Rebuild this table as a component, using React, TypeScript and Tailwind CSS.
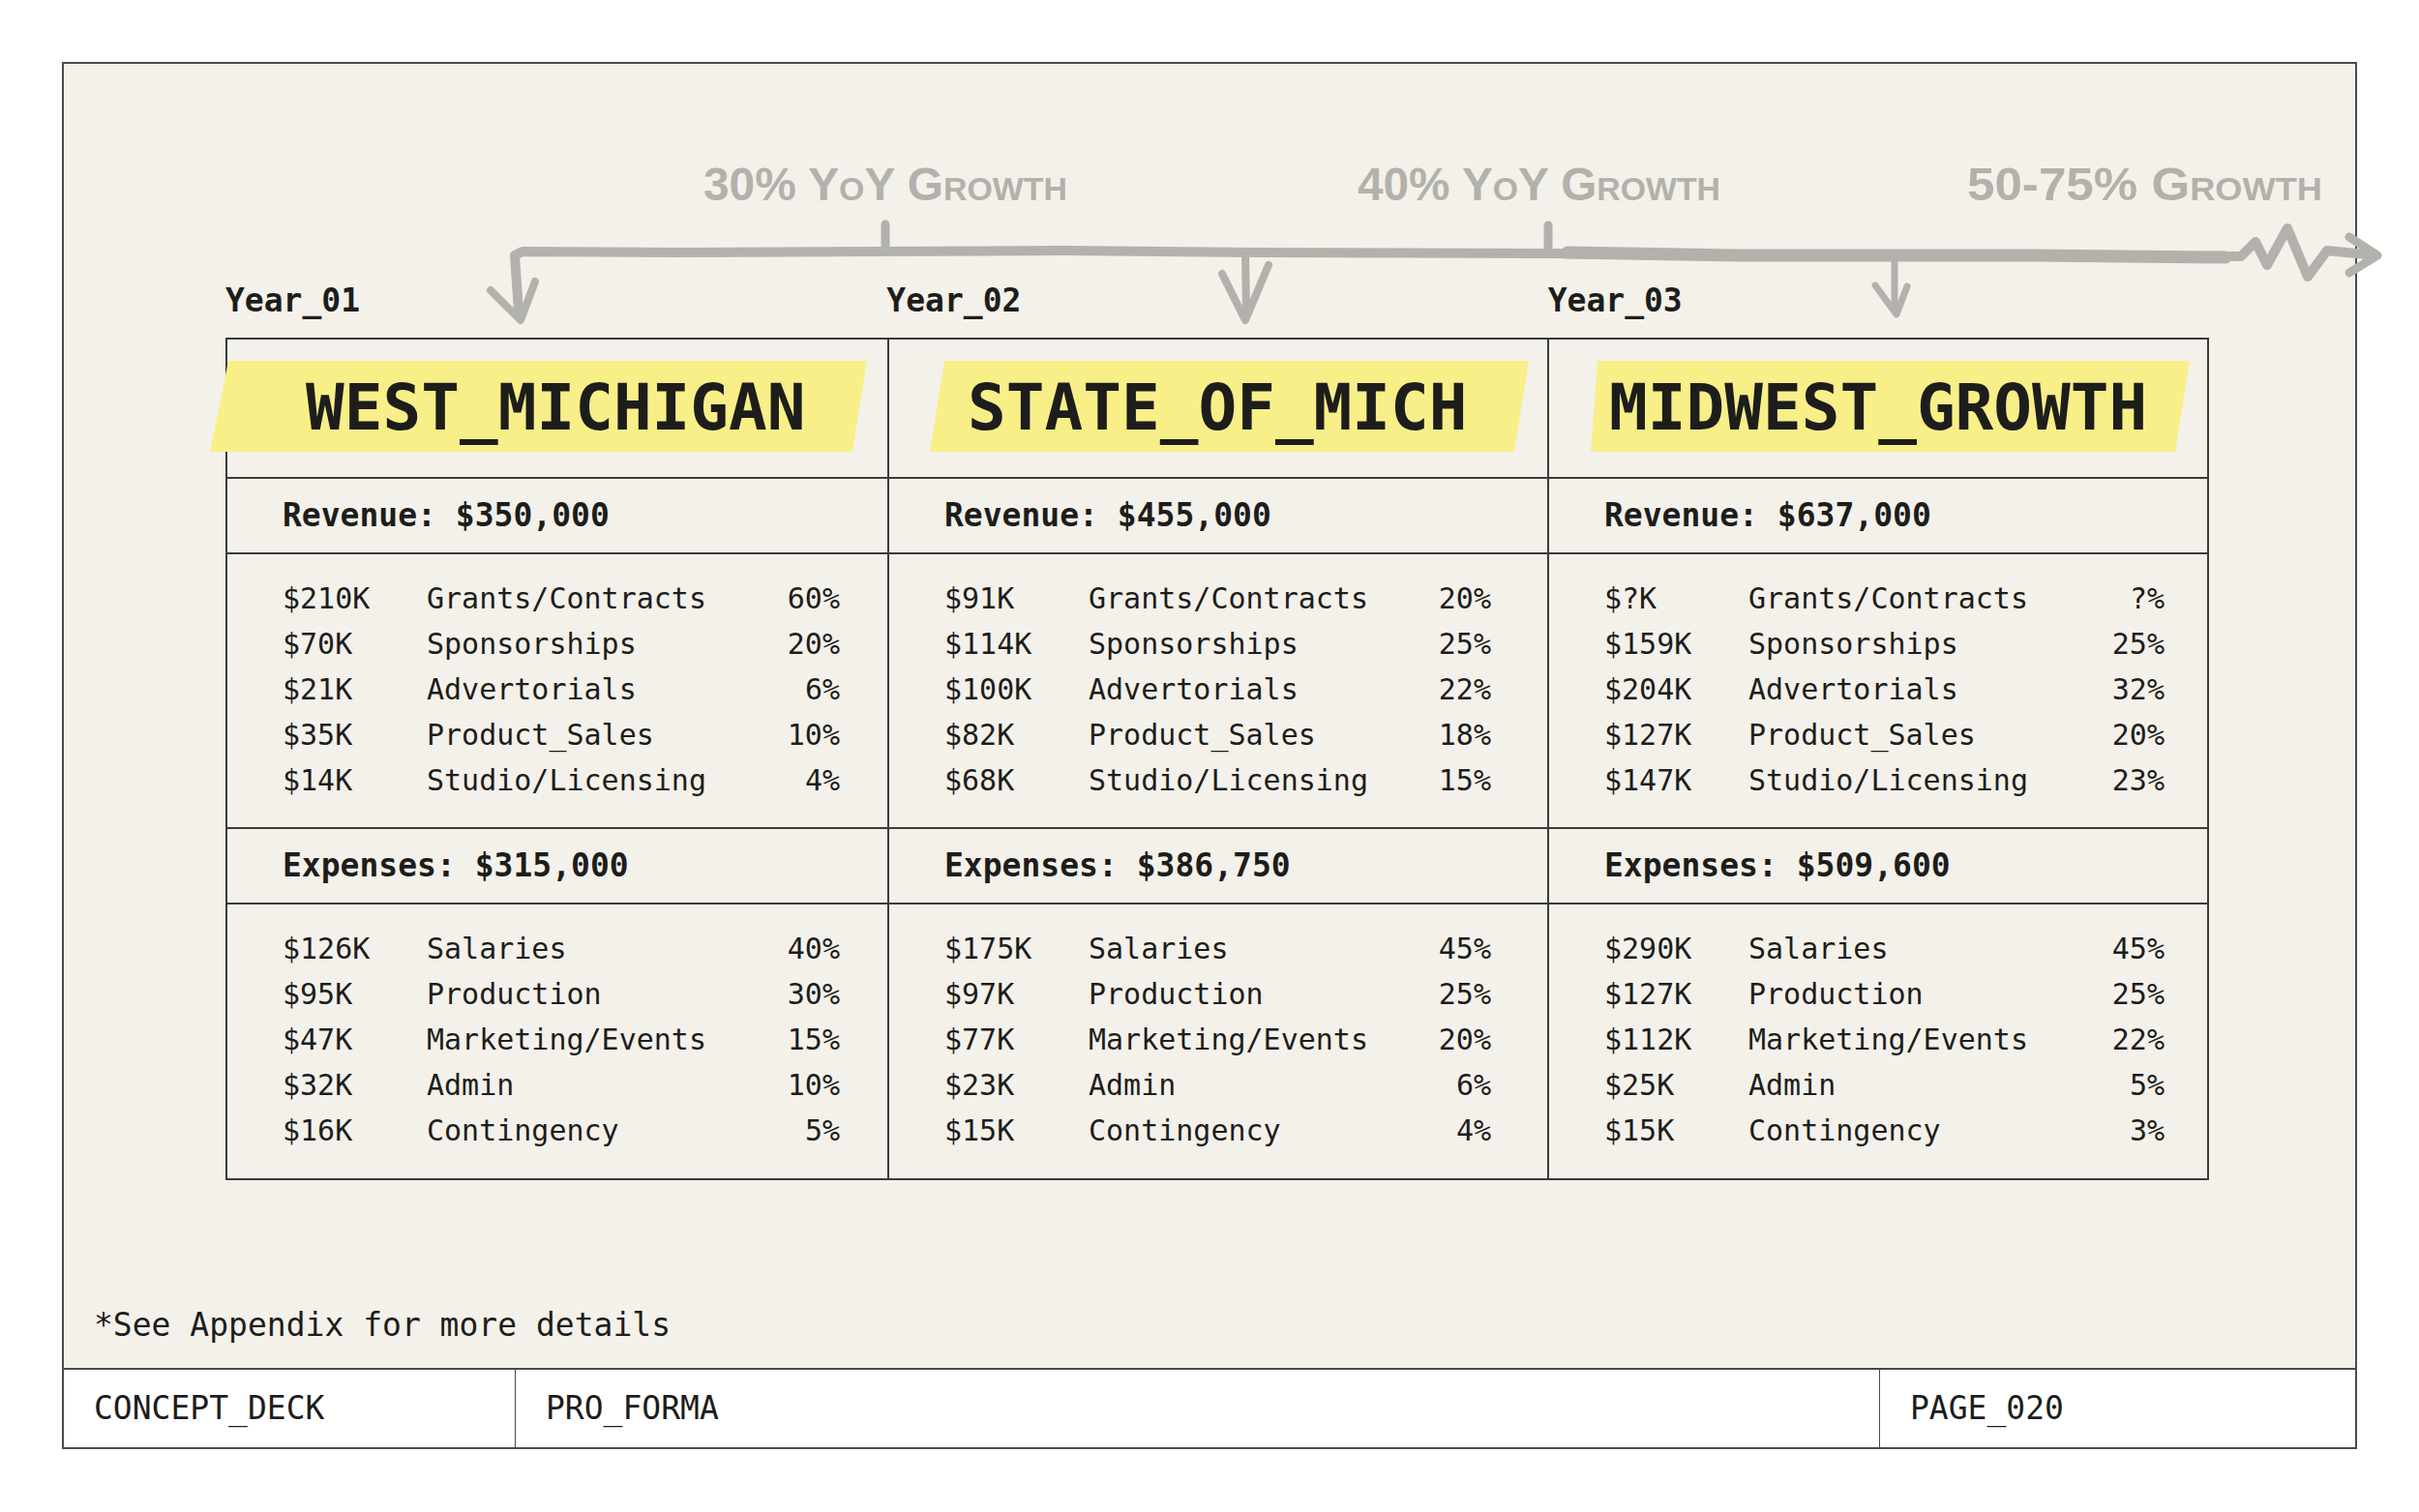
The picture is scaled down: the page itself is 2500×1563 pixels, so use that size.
import React from 'react';

type Item = { amt: string; label: string; pct: string };

interface Region {
  year: string;
  title: string;
  revenue: string;
  expenses: string;
  income: Item[];
  costs: Item[];
  bandClass: string;
  titleClass: string;
  padClass: string;
}

const mono = "font-['DejaVu_Sans_Mono','Liberation_Mono',monospace]";

const regions: Region[] = [
  {
    year: 'Year_01',
    title: 'WEST_MICHIGAN',
    revenue: '$350,000',
    expenses: '$315,000',
    income: [
      { amt: '$210K', label: 'Grants/Contracts', pct: '60%' },
      { amt: '$70K', label: 'Sponsorships', pct: '20%' },
      { amt: '$21K', label: 'Advertorials', pct: '6%' },
      { amt: '$35K', label: 'Product_Sales', pct: '10%' },
      { amt: '$14K', label: 'Studio/Licensing', pct: '4%' },
    ],
    costs: [
      { amt: '$126K', label: 'Salaries', pct: '40%' },
      { amt: '$95K', label: 'Production', pct: '30%' },
      { amt: '$47K', label: 'Marketing/Events', pct: '15%' },
      { amt: '$32K', label: 'Admin', pct: '10%' },
      { amt: '$16K', label: 'Contingency', pct: '5%' },
    ],
    bandClass: 'ml-[-18px] w-[679px] [clip-path:polygon(19px_0,679px_0,664px_100%,0_100%)]',
    titleClass: 'pl-[99px]',
    padClass: 'pr-[49px]',
  },
  {
    year: 'Year_02',
    title: 'STATE_OF_MICH',
    revenue: '$455,000',
    expenses: '$386,750',
    income: [
      { amt: '$91K', label: 'Grants/Contracts', pct: '20%' },
      { amt: '$114K', label: 'Sponsorships', pct: '25%' },
      { amt: '$100K', label: 'Advertorials', pct: '22%' },
      { amt: '$82K', label: 'Product_Sales', pct: '18%' },
      { amt: '$68K', label: 'Studio/Licensing', pct: '15%' },
    ],
    costs: [
      { amt: '$175K', label: 'Salaries', pct: '45%' },
      { amt: '$97K', label: 'Production', pct: '25%' },
      { amt: '$77K', label: 'Marketing/Events', pct: '20%' },
      { amt: '$23K', label: 'Admin', pct: '6%' },
      { amt: '$15K', label: 'Contingency', pct: '4%' },
    ],
    bandClass: 'ml-[42px] w-[619px] [clip-path:polygon(15px_0,619px_0,604px_100%,0_100%)]',
    titleClass: 'pl-[39px]',
    padClass: 'pr-[58px]',
  },
  {
    year: 'Year_03',
    title: 'MIDWEST_GROWTH',
    revenue: '$637,000',
    expenses: '$509,600',
    income: [
      { amt: '$?K', label: 'Grants/Contracts', pct: '?%' },
      { amt: '$159K', label: 'Sponsorships', pct: '25%' },
      { amt: '$204K', label: 'Advertorials', pct: '32%' },
      { amt: '$127K', label: 'Product_Sales', pct: '20%' },
      { amt: '$147K', label: 'Studio/Licensing', pct: '23%' },
    ],
    costs: [
      { amt: '$290K', label: 'Salaries', pct: '45%' },
      { amt: '$127K', label: 'Production', pct: '25%' },
      { amt: '$112K', label: 'Marketing/Events', pct: '22%' },
      { amt: '$25K', label: 'Admin', pct: '5%' },
      { amt: '$15K', label: 'Contingency', pct: '3%' },
    ],
    bandClass: 'ml-[43px] w-[619px] [clip-path:polygon(7px_0,619px_0,604px_100%,0_100%)]',
    titleClass: 'pl-[19px]',
    padClass: 'pr-[44px]',
  },
];

const ink = '#b3b1ab';

// hand-drawn timeline, coordinates are page pixels
const Timeline: React.FC = () => (
  <svg
    className="absolute left-[-66px] top-[-66px] w-[2500px] h-[400px] overflow-visible pointer-events-none"
    viewBox="0 0 2500 400"
  >
    <g fill={ink} fontFamily="'Liberation Sans Narrow','Liberation Sans',sans-serif" fontWeight={700} style={{ fontVariant: 'small-caps' }}>
      <text x={727} y={207} fontSize={48} textLength={376} lengthAdjust="spacingAndGlyphs">30% YoY Growth</text>
      <text x={1403} y={207} fontSize={48} textLength={375} lengthAdjust="spacingAndGlyphs">40% YoY Growth</text>
      <text x={2033} y={207} fontSize={48} textLength={367} lengthAdjust="spacingAndGlyphs">50-75% Growth</text>
    </g>
    <g fill="none" stroke={ink} strokeLinecap="round" strokeLinejoin="round">
      <path
        d="M536 322 L532 264 L540 260 L700 261 L905 260 L1100 259 L1300 261 L1600 262 L1800 264 L2000 264 L2316 265 L2331 250 L2343 274 L2364 236 L2385 286 L2405 259 L2455 264"
        strokeWidth={10}
      />
      <path d="M1620 261 L1800 264 L2100 264 L2300 266" strokeWidth={13} />
      <path d="M507 300 L538 331 L553 291" strokeWidth={8} />
      <path d="M915 258 L915 232" strokeWidth={9} />
      <path d="M1600 260 L1600 233" strokeWidth={9} />
      <path d="M1287 264 L1288 318" strokeWidth={8} />
      <path d="M1263 283 L1287 331 L1311 274" strokeWidth={8} />
      <path d="M1958 264 L1958 318" strokeWidth={7} />
      <path d="M1938 295 L1960 325 L1971 296" strokeWidth={7} />
      <path d="M2428 245 L2457 264 L2428 282" strokeWidth={9} />
    </g>
  </svg>
);

const ItemRows: React.FC<{ items: Item[]; pad: string }> = ({ items, pad }) => (
  <div className={`flex flex-col ${pad}`}>
    {items.map((it) => (
      <div key={it.label} className="flex items-center h-[47px] text-[30px] leading-none">
        <span className="w-[149px] shrink-0">{it.amt}</span>
        <span className="flex-1">{it.label}</span>
        <span className="text-right">{it.pct}</span>
      </div>
    ))}
  </div>
);

export default function App() {
  return (
    <div className="w-[2500px] h-[1563px] bg-white pt-[64px] pl-[64px] text-[#1d1d1b]">
      <div className="relative w-[2372px] h-[1434px] border-2 border-[#4a4a48] bg-[#f3f1ea] flex flex-col">
        <Timeline />

        <div className={`pl-[167px] pt-[225px] ${mono}`}>
          <div className="grid grid-cols-3 w-[2050px] text-[33px] leading-[40px] font-bold">
            {regions.map((r) => (
              <div key={r.year}>{r.year}</div>
            ))}
          </div>

          <div className="mt-[18px] w-[2050px] grid grid-cols-3 border-2 border-[#3b3b39]">
            {regions.map((r, i) => (
              <div key={r.title + 'h'} className={`h-[142px] pt-[22px] ${i > 0 ? 'border-l-2 border-[#3b3b39]' : ''}`}>
                <div className={`h-[94px] bg-[#f9ef88] flex items-center ${r.bandClass}`}>
                  <span className={`text-[66px] font-bold leading-none pt-[4px] ${r.titleClass}`}>{r.title}</span>
                </div>
              </div>
            ))}
            {regions.map((r, i) => (
              <div key={r.title + 'r'} className={`h-[78px] border-t-2 border-[#3b3b39] flex items-center pl-[57px] text-[33px] font-bold ${i > 0 ? 'border-l-2' : ''}`}>
                Revenue:&nbsp;{r.revenue}
              </div>
            ))}
            {regions.map((r, i) => (
              <div key={r.title + 'ri'} className={`border-t-2 border-[#3b3b39] pt-[22px] pb-[25px] pl-[57px] ${i > 0 ? 'border-l-2' : ''}`}>
                <ItemRows items={r.income} pad={r.padClass} />
              </div>
            ))}
            {regions.map((r, i) => (
              <div key={r.title + 'e'} className={`h-[78px] border-t-2 border-[#3b3b39] flex items-center pl-[57px] text-[33px] font-bold ${i > 0 ? 'border-l-2' : ''}`}>
                Expenses:&nbsp;{r.expenses}
              </div>
            ))}
            {regions.map((r, i) => (
              <div key={r.title + 'ei'} className={`border-t-2 border-[#3b3b39] pt-[22px] pb-[26px] pl-[57px] ${i > 0 ? 'border-l-2' : ''}`}>
                <ItemRows items={r.costs} pad={r.padClass} />
              </div>
            ))}
          </div>
        </div>

        <div className="flex-1" />
        <p className={`pl-[31px] mb-[24px] text-[33px] leading-[40px] ${mono}`}>*See Appendix for more details</p>

        <div className={`h-[82px] border-t-2 border-[#4a4a48] bg-white flex text-[33px] ${mono}`}>
          <div className="w-[466px] flex items-center pl-[31px]">CONCEPT_DECK</div>
          <div className="w-[1410px] flex items-center pl-[31px] border-l border-[#4a4a48]">PRO_FORMA</div>
          <div className="flex-1 flex items-center pl-[31px] border-l border-[#4a4a48]">PAGE_020</div>
        </div>
      </div>
    </div>
  );
}
